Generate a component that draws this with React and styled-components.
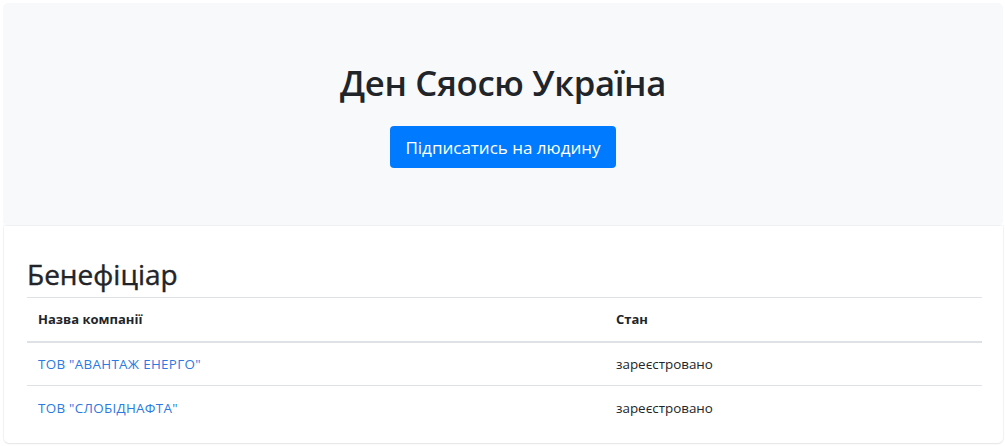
import React from "react";
import styled, { createGlobalStyle } from "styled-components";

const Global = createGlobalStyle`
  html, body { margin: 0; padding: 0; background: #fff; }
  body {
    font-family: "Open Sans", "Noto Sans", sans-serif;
    color: #212529;
    padding: 3px 2px 2px 3px;
  }
  * { box-sizing: border-box; }
`;

const Hero = styled.section`
  background: #f8f9fa;
  border-radius: 5px;
  height: 223px;
  display: flex;
  flex-direction: column;
  align-items: center;
  padding-top: 57px;
`;

const Title = styled.h1`
  margin: 0 0 20px;
  font-size: 34.7px;
  font-weight: 600;
  line-height: 46px;
  letter-spacing: -0.3px;
`;

const Button = styled.button`
  background: #007bff;
  color: #fff;
  border: none;
  border-radius: 4px;
  height: 42px;
  padding: 0 15px;
  font-family: inherit;
  font-size: 17px;
  cursor: pointer;
`;

const Card = styled.section`
  background: #fff;
  margin-left: 1px;
  border-radius: 0 0 5px 5px;
  box-shadow: 0 1px 2px rgba(0,0,0,0.08), 0 0 0 1px rgba(0,0,0,0.03);
  padding: 30px 21px 13px 23px;
`;

const Heading = styled.h2`
  margin: 0 0 5px;
  font-size: 28px;
  font-weight: 500;
  line-height: 36px;
  -webkit-text-stroke: 0.4px #212529;
`;

const Table = styled.table`
  width: 100%;
  border-collapse: collapse;
  font-size: 13.4px;
`;

const Th = styled.th`
  text-align: left;
  font-weight: 700;
  font-size: 13px;
  padding: 0 11px;
  height: 44px;
  border-top: 1px solid #dee2e6;
  border-bottom: 2px solid #dee2e6;
  width: ${(p) => p.$w || "auto"};
`;

const Td = styled.td`
  padding: 0 11px;
  height: 44px;
  border-top: ${(p) => (p.$first ? "none" : "1px solid #dee2e6")};
`;

const Link = styled.a`
  color: #2a7ae2;
  text-decoration: none;
  letter-spacing: 0.3px;
`;

const rows = [
  { name: 'ТОВ "АВАНТАЖ ЕНЕРГО"', state: "зареєстровано" },
  { name: 'ТОВ "СЛОБІДНАФТА"', state: "зареєстровано" },
];

export default function App() {
  return (
    <>
      <Global />
      <Hero>
        <Title>Ден Сяосю Україна</Title>
        <Button>Підписатись на людину</Button>
      </Hero>
      <Card>
        <Heading>Бенефіціар</Heading>
        <Table>
          <thead>
            <tr>
              <Th $w="578px">Назва компанії</Th>
              <Th>Стан</Th>
            </tr>
          </thead>
          <tbody>
            {rows.map((r, i) => (
              <tr key={i}>
                <Td $first={i === 0}>
                  <Link href="#">{r.name}</Link>
                </Td>
                <Td $first={i === 0}>{r.state}</Td>
              </tr>
            ))}
          </tbody>
        </Table>
      </Card>
    </>
  );
}
